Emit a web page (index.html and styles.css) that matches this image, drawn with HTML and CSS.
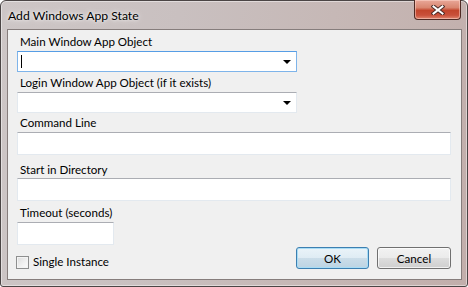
FILE: index.html
```html
<!DOCTYPE html>
<html>
<head>
    <title>Add Windows App State</title>
    <link rel="stylesheet" href="styles.css">
</head>
<body>
    <div class="window">
        <div class="titlebar">
            <span class="title">Add Windows App State</span>
            <button class="close" aria-label="Close">
                <svg width="14" height="10" viewBox="0 0 14 10">
                    <path d="M2.5 1.5 L11.5 8.5 M11.5 1.5 L2.5 8.5" stroke="#4a2a26" stroke-width="4" stroke-linecap="square" fill="none"/>
                    <path d="M2.5 1.5 L11.5 8.5 M11.5 1.5 L2.5 8.5" stroke="#ffffff" stroke-width="2" stroke-linecap="square" fill="none"/>
                </svg>
            </button>
        </div>

        <div class="client">
            <label class="field-label lbl-main">Main Window App Object</label>
            <div class="combo focused"><span class="caret"></span><span class="arrow"></span></div>

            <label class="field-label lbl-login">Login Window App Object (if it exists)</label>
            <div class="combo"><span class="arrow"></span></div>

            <label class="field-label lbl-cmd">Command Line</label>
            <div class="textbox wide"></div>

            <label class="field-label lbl-dir">Start in Directory</label>
            <div class="textbox wide"></div>

            <label class="field-label lbl-timeout">Timeout (seconds)</label>
            <div class="textbox short"></div>

            <div class="footer">
                <label class="check"><span class="checkbox"></span>Single Instance</label>
                <div class="buttons">
                    <button class="btn default">OK</button>
                    <button class="btn">Cancel</button>
                </div>
            </div>
        </div>
    </div>
</body>
</html>
```

FILE: styles.css
```css
body { margin: 0; font-family: Lato, "Liberation Sans", sans-serif; font-size: 11.6px; color: #000; background: #fff; }

.window {
    width: 468px;
    height: 287px;
    box-sizing: border-box;
    display: flex;
    flex-direction: column;
    padding: 0 5px 6px 6px;
    border: 1px solid #4b4545;
    border-radius: 6px 6px 3px 3px;
    background: linear-gradient(100deg, #cdc6c6 0%, #c9c0c0 35%, #c6b8b6 65%, #c2aeab 100%);
    box-shadow: inset 0 0 0 1px rgba(255, 255, 255, 0.45);
}

.titlebar {
    height: 28px;
    display: flex;
    align-items: center;
    justify-content: space-between;
}
.title {
    padding-left: 1px;
    font-size: 12.2px;
    text-shadow: 0 0 6px rgba(255, 255, 255, 0.9), 0 0 3px rgba(255, 255, 255, 0.8);
}
.close {
    align-self: flex-start;
    margin: -1px 1px 0 0;
    width: 47px;
    height: 20px;
    padding: 0;
    display: flex;
    align-items: center;
    justify-content: center;
    border: 1px solid #4f2a24;
    border-top: none;
    border-radius: 0 0 4px 4px;
    background: linear-gradient(#e9a899 0%, #d98670 40%, #c3452c 55%, #c9503a 80%, #e0866f 100%);
    box-shadow: inset 0 0 0 1px rgba(255, 220, 210, 0.5);
}

.client {
    flex: 1;
    display: flex;
    flex-direction: column;
    align-items: flex-start;
    padding: 0 10px 0 9px;
    background: #f0f0f0;
    border: 1px solid #867d7c;
}

.field-label { display: block; line-height: 16px; padding-left: 3px; }
.lbl-main { margin: 4px 0 1px; }
.lbl-login { margin: 3px 0 1px; }
.lbl-cmd { margin: 2px 0 1px; }
.lbl-dir { margin: 7px 0 0; }
.lbl-timeout { margin: 4px 0 1px; }

.combo, .textbox {
    box-sizing: border-box;
    background: #fff;
    border: 1px solid #e3e9ef;
    border-top-color: #abadb3;
    position: relative;
}
.combo { width: 280px; height: 21px; }
.combo.focused { border-color: #7eb4ea; border-top-color: #569de5; }
.caret { position: absolute; left: 3px; top: 3px; width: 1px; height: 13px; background: #000; }
.arrow {
    position: absolute;
    right: 5px;
    top: 8px;
    border-left: 4px solid transparent;
    border-right: 4px solid transparent;
    border-top: 4px solid #000;
}
.textbox { height: 23px; }
.textbox.wide { width: 434px; }
.textbox.short { width: 97px; }

.footer {
    align-self: stretch;
    margin-top: 2px;
    display: flex;
    justify-content: space-between;
    align-items: flex-end;
}
.check { display: flex; align-items: center; gap: 4px; margin: 0 0 0 -1px; line-height: 14px; }
.checkbox {
    width: 11px;
    height: 11px;
    border: 1px solid #8e8f8f;
    background: linear-gradient(135deg, #dcdcdc, #f2f2f2 60%, #fbfbfb);
    box-shadow: inset 0 0 0 1px #f4f4f4;
}
.buttons { display: flex; gap: 8px; }
.btn {
    width: 73px;
    height: 22px;
    padding: 0;
    font-family: Lato, "Liberation Sans", sans-serif;
    font-size: 11.6px;
    color: #000;
    border: 1px solid #707070;
    border-radius: 3px;
    background: linear-gradient(#f2f2f2 0%, #ebebeb 49%, #dddddd 50%, #cfcfcf 100%);
    box-shadow: inset 0 0 0 1px rgba(255, 255, 255, 0.7);
}
.btn + .btn { width: 74px; }
.btn.default {
    border-color: #3c7fb1;
    background: linear-gradient(#eaf3f9 0%, #dfecf4 49%, #cbdde9 50%, #bdd4e3 100%);
    box-shadow: inset 0 0 0 1px #a8dcf5;
}
```
